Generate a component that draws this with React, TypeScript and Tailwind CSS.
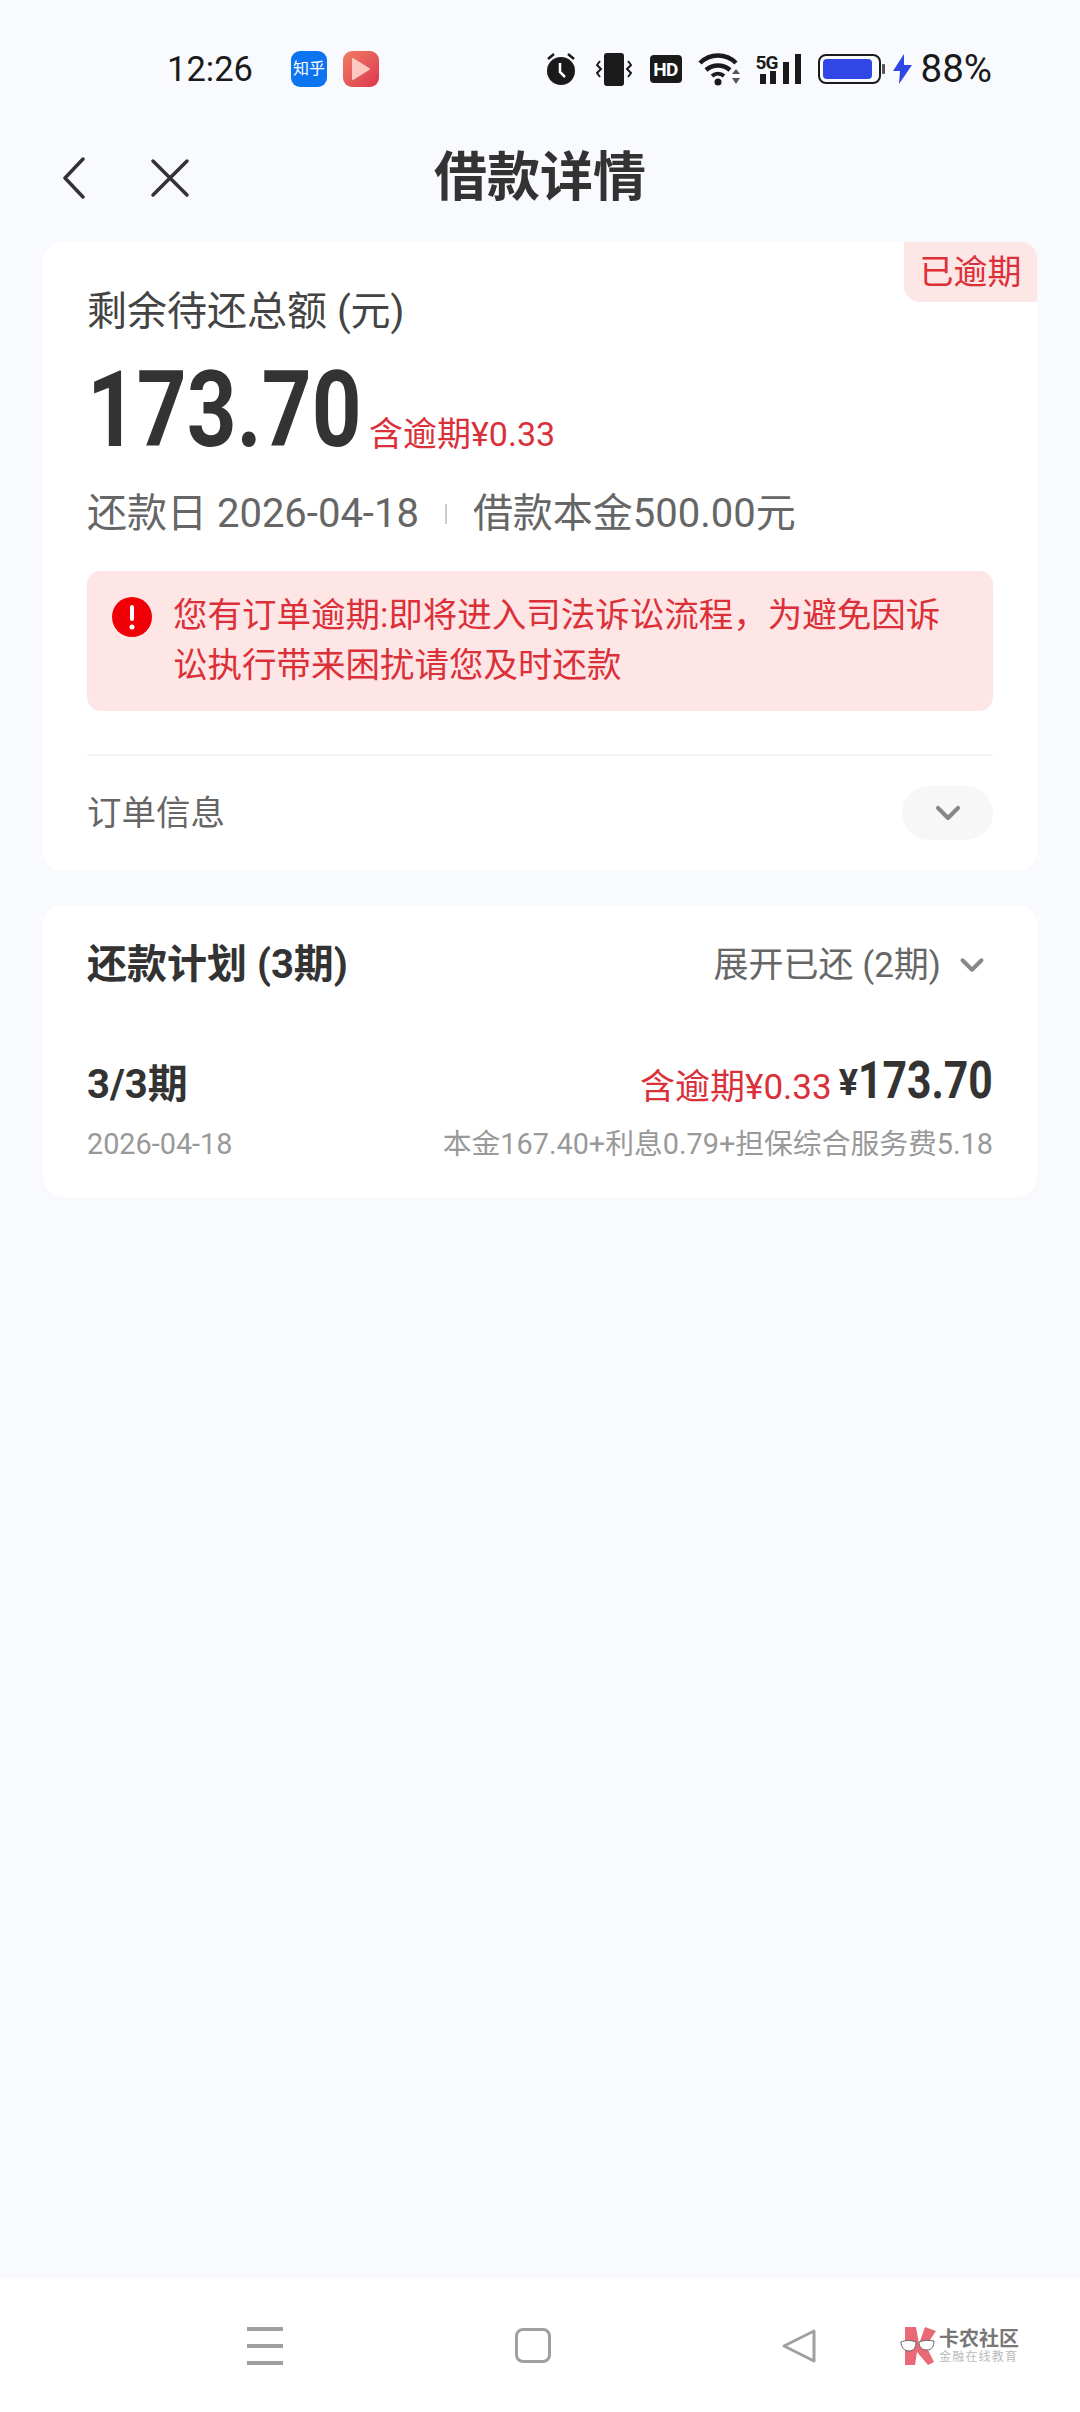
import { ChevronDown } from "lucide-react";

const font = { fontFamily: "Roboto, 'Noto Sans CJK SC', sans-serif" };

function StatusIcons() {
  return (
    <div className="flex items-center">
      {/* alarm */}
      <svg width="30" height="34" viewBox="0 0 30 34">
        <circle cx="15" cy="19" r="14" fill="#1a1a1a" />
        <path d="M14 11v9l5 5" stroke="#fff" strokeWidth="2.5" fill="none" />
        <path d="M2 7l6-5M28 7l-6-5" stroke="#1a1a1a" strokeWidth="2.5" />
      </svg>
      {/* vibrate */}
      <svg width="36" height="33" viewBox="0 0 36 33" className="ml-[20px]">
        <rect x="8" y="0" width="20" height="33" rx="3" fill="#1a1a1a" />
        <path d="M4 8l-3 4 4 4-4 4 3 4M32 8l3 4-4 4 4 4-3 4" stroke="#1a1a1a" strokeWidth="2" fill="none" />
      </svg>
      {/* hd */}
      <div className="ml-[18px] flex h-[28px] w-[32px] items-center justify-center rounded-[4px] bg-[#1a1a1a] text-[19px] leading-none font-bold text-white" style={{ fontFamily: "Roboto, sans-serif", letterSpacing: "-0.5px" }}>
        HD
      </div>
      {/* wifi */}
      <svg width="43" height="34" viewBox="0 0 43 34" className="ml-[16px]">
        <path d="M2 11c10-10 26-10 36 0" stroke="#1a1a1a" strokeWidth="4.5" fill="none" />
        <path d="M8 18c7-6 17-6 24 0" stroke="#1a1a1a" strokeWidth="4.5" fill="none" />
        <path d="M14 24c3.500-3 8.500-3 12 0" stroke="#1a1a1a" strokeWidth="4" fill="none" />
        <circle cx="20" cy="30" r="3.500" fill="#1a1a1a" />
        <path d="M34 22l4-5 4 5zM34 26l4 6 4-6z" fill="#555" />
      </svg>
      {/* 5G signal */}
      <div className="relative ml-[15px] h-[30px] w-[46px]">
        <span className="absolute top-[-1px] left-0 text-[19px] leading-none font-bold text-[#1a1a1a]" style={{ fontFamily: "Roboto, sans-serif", letterSpacing: "-1px" }}>
          5G
        </span>
        <svg width="46" height="30" viewBox="0 0 46 30" className="absolute inset-0">
          <rect x="4" y="20" width="6" height="10" fill="#1a1a1a" />
          <rect x="14" y="17" width="6" height="13" fill="#1a1a1a" />
          <rect x="27" y="8" width="6" height="22" fill="#1a1a1a" />
          <rect x="39" y="0" width="6" height="30" fill="#1a1a1a" />
        </svg>
      </div>
      {/* battery */}
      <svg width="67" height="30" viewBox="0 0 67 30" className="ml-[16px]">
        <rect x="1" y="1" width="61" height="28" rx="7" fill="none" stroke="#1a1a1a" strokeWidth="2" />
        <rect x="5" y="5" width="49" height="20" rx="4" fill="#3047e6" />
        <rect x="64" y="10" width="3" height="10" rx="1" fill="#555" />
      </svg>
      {/* bolt */}
      <svg width="19" height="30" viewBox="0 0 19 30" className="ml-[8px]">
        <path d="M11 0L0 17h7l-1 13L19 11h-8z" fill="#3047e6" />
      </svg>
      <span className="ml-[9px] text-[38.500px] leading-none text-[#1a1a1a]">88%</span>
    </div>
  );
}

function Logo() {
  return (
    <div className="flex items-center">
      <svg width="36" height="38" viewBox="0 0 36 38">
        <path d="M5 0h11l3 17 6-17 11 4-10 15 8 16-6 3-11-13-2 13H5z" fill="#e96a75" />
        <path d="M1 15c5-2 10-2 15 0 0 5-2 9-7 9s-8-4-8-9zM19 15c5-2 10-2 15-1 0 5-2 9-7 9s-8-3-8-8z" fill="#fff" stroke="#666" strokeWidth="1" />
      </svg>
      <div className="ml-[3px] flex flex-col">
        <span className="text-[20px] leading-[22px] font-bold text-[#777]">卡农社区</span>
        <span className="mt-[1px] text-[12px] leading-[13px] tracking-[1.200px] text-[#bbb]">金融在线教育</span>
      </div>
    </div>
  );
}

export default function App() {
  return (
    <div className="flex h-[2412px] w-[1080px] flex-col overflow-hidden bg-[#f9fafe]" style={font}>
      {/* Status bar */}
      <div className="flex h-[138px] items-center pr-[88px] pl-[167px]">
        <span className="w-[85px] text-[34.500px] leading-none text-[#1a1a1a]">12:26</span>
        <div className="ml-[39px] flex h-[36px] w-[36px] items-center justify-center rounded-[9px] bg-[#0d74f0] text-[16px] leading-none text-white">
          知乎
        </div>
        <div className="ml-[16px] flex h-[36px] w-[36px] items-center justify-center rounded-[9px] bg-gradient-to-br from-[#ef7b64] to-[#dc3350]">
          <svg width="20" height="24" viewBox="0 0 20 24">
            <path d="M2 2l16 10L2 22z" fill="#fbc9c2" stroke="#fbc9c2" strokeWidth="2" strokeLinejoin="round" />
          </svg>
        </div>
        <div className="ml-auto">
          <StatusIcons />
        </div>
      </div>

      {/* Nav */}
      <div className="relative mt-[5px] flex h-[70px] items-center justify-center">
        <div className="absolute top-[14px] left-[62px] flex items-center">
          <svg width="24" height="42" viewBox="0 0 24 42">
            <path d="M21 2L3 21l18 19" stroke="#333" strokeWidth="3.500" fill="none" strokeLinecap="round" strokeLinejoin="round" />
          </svg>
          <svg width="40" height="40" viewBox="0 0 40 40" className="ml-[64px]">
            <path d="M3 3l34 34M37 3L3 37" stroke="#333" strokeWidth="3.500" fill="none" strokeLinecap="round" />
          </svg>
        </div>
        <span className="text-[53px] leading-none font-bold text-[#333]">借款详情</span>
      </div>

      {/* Summary card */}
      <div className="relative mx-[43px] mt-[29px] h-[629px] rounded-[20px] bg-white px-[44px] pt-[45px]">
        <div className="absolute top-0 right-0 flex h-[60px] w-[133px] items-center justify-center rounded-tr-[16px] rounded-bl-[16px] bg-[#fde6e6] text-[34px] leading-none text-[#dc3038]">
          已逾期
        </div>
        <div className="text-[40px] leading-[50px] text-[#444]">剩余待还总额 (元)</div>
        <div className="mt-[25px] flex h-[96px] items-end">
          <span className="inline-block w-[282px] origin-left scale-x-[0.82] text-[106px] leading-[96px] font-bold text-[#333]">173.70</span>
          <span className="mb-[1px] text-[34px] leading-[46px] text-[#d9303a]">含逾期¥0.33</span>
        </div>
        <div className="mt-[31px] flex h-[50px] items-center text-[40px] leading-none text-[#666]">
          <span>还款日 2026-04-18</span>
          <span className="mx-[26px] h-[20px] w-[2px] bg-[#ccc]" />
          <span>借款本金500.00元</span>
        </div>
        <div className="mt-[32px] flex h-[140px] rounded-[14px] bg-[#fee6e6] pt-[19px] pl-[25px]">
          <svg width="40" height="40" viewBox="0 0 40 40" className="mt-[7px] shrink-0">
            <circle cx="20" cy="20" r="20" fill="#f00006" />
            <rect x="18" y="8" width="4" height="16" rx="2" fill="#fff" />
            <circle cx="20" cy="30" r="2.500" fill="#fff" />
          </svg>
          <div className="ml-[21px] w-[790px] text-[34.500px] leading-[50px] text-[#dc3038]">
            您有订单逾期:即将进入司法诉讼流程，为避免因诉讼执行带来困扰请您及时还款
          </div>
        </div>
        <div className="mt-[43px] h-[2px] bg-[#f2f3f5]" />
        <div className="mt-[30px] flex items-center justify-between">
          <span className="text-[34.500px] leading-none text-[#666]">订单信息</span>
          <div className="flex h-[54px] w-[91px] items-center justify-center rounded-full bg-[#f7f7f7]">
            <ChevronDown size={40} strokeWidth={2.5} color="#888" />
          </div>
        </div>
      </div>

      {/* Plan card */}
      <div className="mx-[43px] mt-[34px] h-[292px] rounded-[20px] bg-white px-[44px]">
        <div className="flex h-[120px] items-center justify-between">
          <span className="text-[40px] leading-none font-bold text-[#333]">还款计划 (3期)</span>
          <div className="flex items-center">
            <span className="text-[35px] leading-none text-[#666]">展开已还 (2期)</span>
            <ChevronDown size={38} strokeWidth={2.5} color="#888" className="mr-[2px] ml-[12px]" />
          </div>
        </div>
        <div className="mt-[30px] flex h-[56px] items-center justify-between">
          <span className="mt-[4px] text-[40px] leading-none font-bold text-[#333]">3/3期</span>
          <div className="flex items-center">
            <span className="mt-[8px] text-[35px] leading-none text-[#d9303a]">含逾期¥0.33</span>
            <span className="ml-[7px] text-[36px] leading-none font-bold text-[#333]">¥</span>
            <span className="mb-[5px] inline-block w-[135px] origin-left scale-x-[0.82] text-[52px] leading-none font-bold whitespace-nowrap text-[#333]">173.70</span>
          </div>
        </div>
        <div className="mt-[19px] flex items-center justify-between text-[28.800px] leading-none text-[#999]">
          <span>2026-04-18</span>
          <span>本金167.40+利息0.79+担保综合服务费5.18</span>
        </div>
      </div>

      {/* Bottom nav */}
      <div className="mt-auto flex h-[133px] items-center bg-white">
        <div className="ml-[247px] flex w-[36px] flex-col gap-[13px]">
          <div className="h-[4px] bg-[#a0a0a0]" />
          <div className="h-[4px] bg-[#a0a0a0]" />
          <div className="h-[4px] bg-[#a0a0a0]" />
        </div>
        <div className="ml-[232px] h-[35px] w-[36px] rounded-[8px] border-[3px] border-[#a0a0a0]" />
        <svg width="36" height="36" viewBox="0 0 36 36" className="ml-[230px]">
          <path d="M33 3L3 18l30 15z" fill="none" stroke="#a0a0a0" strokeWidth="3" strokeLinejoin="round" />
        </svg>
        <div className="ml-[83px]">
          <Logo />
        </div>
      </div>
    </div>
  );
}
